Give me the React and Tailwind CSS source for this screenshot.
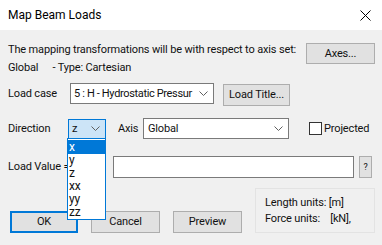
import React from "react";

const Chevron = () => (
  <svg width="9" height="5" viewBox="0 0 9 5" className="shrink-0">
    <path d="M0.5 0.5 L4.5 4.5 L8.5 0.5" fill="none" stroke="#606060" strokeWidth="1" />
  </svg>
);

const Btn = ({ className = "", children }) => (
  <div className={"flex items-center justify-center bg-[#e1e1e1] border border-[#adadad] shrink-0 " + className}>
    {children}
  </div>
);

export default function App() {
  return (
    <div
      className="relative w-[382px] h-[245px] bg-[#f0f0f0] overflow-hidden text-[11px] tracking-[-0.15px] leading-[16px] text-[#111] whitespace-nowrap"
      style={{ fontFamily: 'Roboto, "Noto Sans", sans-serif' }}
    >
      <div className="h-[30px] bg-white flex items-center justify-between pl-[8px] pr-[11px]">
        <span className="text-[12px] tracking-normal leading-none text-black">Map Beam Loads</span>
        <svg width="11" height="11" viewBox="0 0 11 11">
          <path d="M0.5 0.5 L10.5 10.5 M10.5 0.5 L0.5 10.5" stroke="#000" strokeWidth="1" />
        </svg>
      </div>

      <div className="pl-[8px]">
        <div className="flex justify-between pt-[11px] pr-[7px]">
          <div className="leading-[18px] min-w-0">
            <div>The mapping transformations will be with respect to axis set:</div>
            <div>
              Global<span className="inline-block w-[14px]" />- Type: Cartesian
            </div>
          </div>
          <Btn className="mt-[2px] w-[69px] h-[21px]">Axes...</Btn>
        </div>

        <div className="flex items-start mt-[6px] h-[23px]">
          <div className="w-[62px] h-[21px] flex items-center">Load case</div>
          <div className="w-[144px] h-[21px] bg-white border border-[#7a7a7a] flex items-center justify-between pl-[3px] pr-[5px]">
            <span className="tracking-[-0.35px]">5 : H - Hydrostatic Pressur</span>
            <Chevron />
          </div>
          <Btn className="ml-[9px] mt-[1px] w-[67px] h-[22px]">Load Title...</Btn>
        </div>

        <div className="flex items-center mt-[12px] h-[21px]">
          <div className="w-[60px]">Direction</div>
          <div className="w-[38px] h-[20px] bg-[#cce4f7] border border-[#0078d7] flex items-center justify-between pl-[3px] pr-[5px]">
            <span>z</span>
            <Chevron />
          </div>
          <div className="ml-[12px] w-[25px]">Axis</div>
          <div className="w-[146px] h-[21px] bg-white border border-[#7a7a7a] flex items-center justify-between pl-[4px] pr-[5px]">
            <span>Global</span>
            <Chevron />
          </div>
          <div className="ml-[20px] w-[13px] h-[13px] bg-white border border-[#333]" />
          <div className="ml-[2px]">Projected</div>
        </div>

        <div className="flex items-center mt-[17px] h-[22px]">
          <div className="w-[105px]">Load Value =</div>
          <div className="w-[241px] h-[22px] bg-white border border-[#7a7a7a]" />
          <Btn className="ml-[5px] w-[13px] h-[22px] text-[9px]">?</Btn>
        </div>

        <div className="flex items-end mt-[10px] h-[45px]">
          <div className="ml-[2px] w-[68px] h-[22px] flex items-center justify-center bg-[#e1e1e1] border-2 border-[#0078d7]">OK</div>
          <Btn className="ml-[13px] w-[69px] h-[22px]">Cancel</Btn>
          <Btn className="ml-[13px] w-[69px] h-[22px]">Preview</Btn>
          <div className="ml-[13px] w-[120px] h-[45px] border border-[#e3e3e3] pl-[9px] pt-[6px] leading-[16px]">
            <div>Length units: [m]</div>
            <div>
              Force units:<span className="inline-block w-[10px]" />[kN],
            </div>
          </div>
        </div>
      </div>

      <div className="absolute left-[67px] top-[138px] w-[39px] h-[82px] bg-white border border-[#0078d7] leading-[13px] pt-[1px] text-[12px]">
        <div className="bg-[#0078d7] text-white pl-[1px] h-[14px] leading-[14px]">x</div>
        <div className="pl-[1px]">y</div>
        <div className="pl-[1px]">z</div>
        <div className="pl-[1px]">xx</div>
        <div className="pl-[1px]">yy</div>
        <div className="pl-[1px]">zz</div>
      </div>
    </div>
  );
}
